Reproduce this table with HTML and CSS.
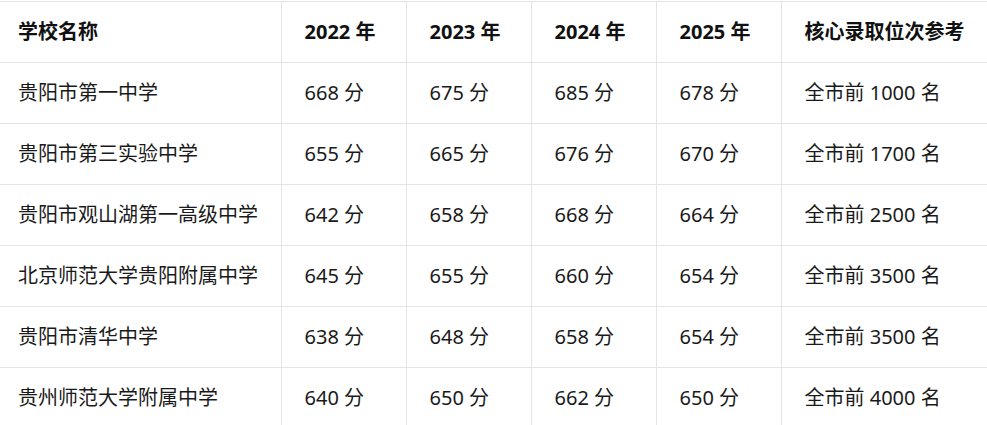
FILE: index.html
```html
<!DOCTYPE html>
<html lang="zh-CN">
<head>
<meta charset="utf-8">
<title>贵阳高中录取分数</title>
<link rel="stylesheet" href="styles.css">
</head>
<body>
<table class="scores">
  <colgroup>
    <col class="c-name"><col class="c-year"><col class="c-year"><col class="c-year"><col class="c-year"><col class="c-rank">
  </colgroup>
  <thead>
    <tr><th class="name">学校名称</th><th>2022 年</th><th>2023 年</th><th>2024 年</th><th>2025 年</th><th class="rank">核心录取位次参考</th></tr>
  </thead>
  <tbody>
    <tr><td class="name">贵阳市第一中学</td><td>668 分</td><td>675 分</td><td>685 分</td><td>678 分</td><td class="rank">全市前 1000 名</td></tr>
    <tr><td class="name">贵阳市第三实验中学</td><td>655 分</td><td>665 分</td><td>676 分</td><td>670 分</td><td class="rank">全市前 1700 名</td></tr>
    <tr><td class="name">贵阳市观山湖第一高级中学</td><td>642 分</td><td>658 分</td><td>668 分</td><td>664 分</td><td class="rank">全市前 2500 名</td></tr>
    <tr><td class="name">北京师范大学贵阳附属中学</td><td>645 分</td><td>655 分</td><td>660 分</td><td>654 分</td><td class="rank">全市前 3500 名</td></tr>
    <tr><td class="name">贵阳市清华中学</td><td>638 分</td><td>648 分</td><td>658 分</td><td>654 分</td><td class="rank">全市前 3500 名</td></tr>
    <tr><td class="name">贵州师范大学附属中学</td><td>640 分</td><td>650 分</td><td>662 分</td><td>650 分</td><td class="rank">全市前 4000 名</td></tr>
  </tbody>
</table>
</body>
</html>
```
FILE: styles.css
```css
html, body {
  margin: 0;
  padding: 0;
  background: #ffffff;
  overflow: hidden;
}
body {
  padding-top: 1px;
  font-family: "Noto Sans", "Noto Sans CJK SC", sans-serif;
  color: #1a1a1a;
}
.scores {
  border-collapse: collapse;
  table-layout: fixed;
  width: 987px;
}
.c-name { width: 281px; }
.c-year { width: 125px; }
.c-rank { width: 206px; }
.scores th,
.scores td {
  box-sizing: border-box;
  height: 61px;
  padding: 0 0 1px 23px;
  text-align: left;
  vertical-align: middle;
  border: 1px solid #e4e4e4;
  font-size: 20px;
  line-height: 28px;
  white-space: nowrap;
}
.scores th {
  font-weight: 700;
  color: #111111;
}
.scores td {
  font-weight: 400;
}
.scores .name {
  padding-left: 18px;
  border-left: none;
}
.scores .rank {
  border-right: none;
}
```
